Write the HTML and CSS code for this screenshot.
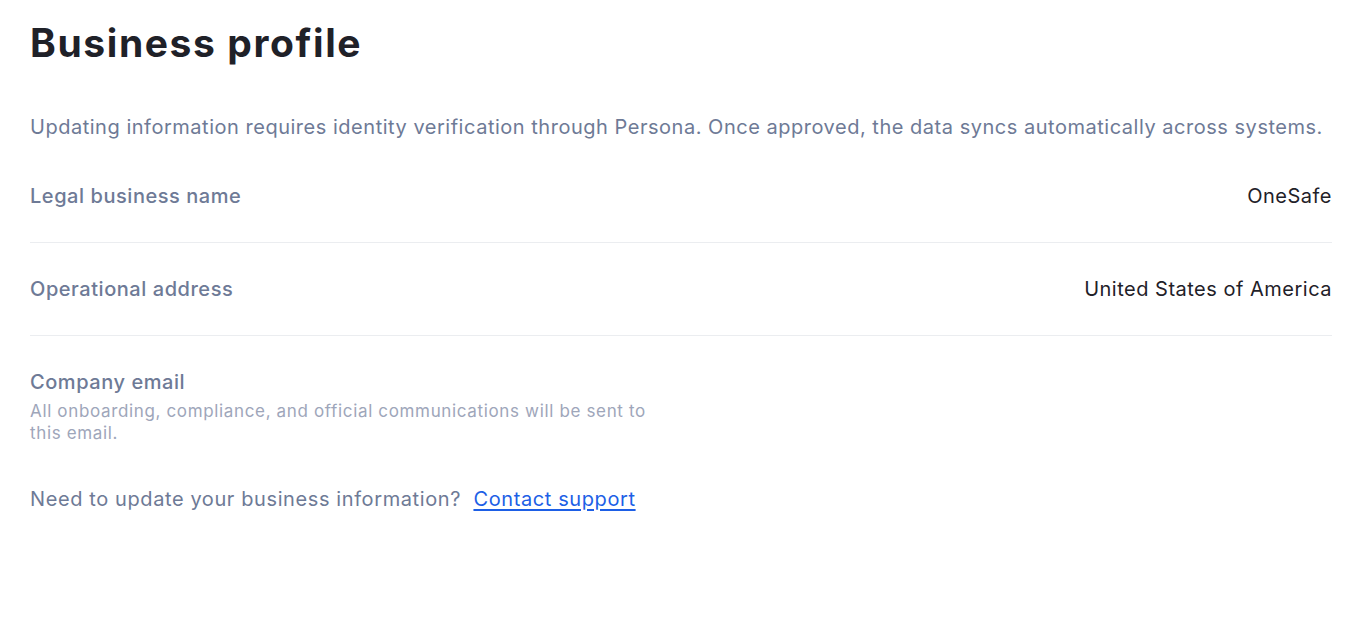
FILE: index.html
```html
<!DOCTYPE html>
<html lang="en">
<head>
<meta charset="utf-8">
<title>Business profile</title>
<link rel="stylesheet" href="styles.css">
</head>
<body>
<main class="page">
  <h1 class="title">Business profile</h1>
  <p class="intro">Updating information requires identity verification through Persona. Once approved, the data syncs automatically across systems.</p>
  <section class="rows">
    <div class="row">
      <div class="label">Legal business name</div>
      <div class="value">OneSafe</div>
    </div>
    <div class="row">
      <div class="label">Operational address</div>
      <div class="value">United States of America</div>
    </div>
    <div class="row row-last">
      <div class="label-group">
        <div class="label">Company email</div>
        <div class="desc">All onboarding, compliance, and official communications will be sent to this email.</div>
      </div>
    </div>
  </section>
  <p class="help">Need to update your business information?&nbsp; <a class="link" href="#">Contact support</a></p>
</main>
</body>
</html>
```
FILE: styles.css
```css
* { box-sizing: border-box; }
html, body { margin: 0; padding: 0; background: #ffffff; }
body {
  font-family: Inter, "Noto Sans", "Liberation Sans", sans-serif;
  color: #1f2128;
}
.page {
  padding: 19px 32px 0 30px;
  display: flex;
  flex-direction: column;
}
.title {
  margin: 0;
  font-size: 39px;
  line-height: 48px;
  font-weight: 700;
  letter-spacing: 1.6px;
  color: #1f2128;
}
.intro {
  margin: 47px 0 0 0;
  font-size: 20px;
  line-height: 26px;
  letter-spacing: 0.52px;
  color: #6e7a96;
}
.rows { margin-top: 10px; display: flex; flex-direction: column; }
.row {
  display: flex;
  justify-content: space-between;
  align-items: flex-start;
  padding: 33px 0;
  border-bottom: 1px solid #ebedf0;
}
.row-last { border-bottom: none; padding-bottom: 0; }
.label {
  font-size: 20px;
  line-height: 26px;
  font-weight: 500;
  letter-spacing: 0.55px;
  color: #6e7a96;
}
.value {
  font-size: 20px;
  line-height: 26px;
  letter-spacing: 0.5px;
  color: #1f2128;
}
.label-group { width: 650px; }
.desc {
  margin-top: 5px;
  font-size: 17px;
  line-height: 22px;
  letter-spacing: 0.65px;
  color: #9ea6ba;
}
.help {
  margin: 42px 0 0 0;
  font-size: 20px;
  line-height: 26px;
  letter-spacing: 0.6px;
  color: #6e7a96;
}
.link {
  color: #1d5fe6;
  text-decoration: underline;
  text-underline-offset: 3px;
}
```
